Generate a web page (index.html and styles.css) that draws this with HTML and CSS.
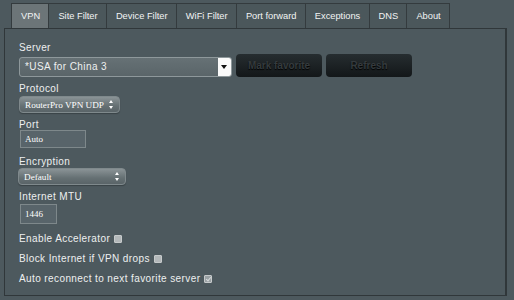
FILE: index.html
```html
<!DOCTYPE html>
<html lang="en">
<head>
    <meta charset="UTF-8">
    <meta name="viewport" content="width=device-width, initial-scale=1.0">
    <title>VPN Settings</title>
    <link rel="stylesheet" href="styles.css">
</head>
<body>
    <!-- Tabs -->
    <div class="tabs">
        <div class="tab active">VPN</div>
        <div class="tab">Site Filter</div>
        <div class="tab">Device Filter</div>
        <div class="tab">WiFi Filter</div>
        <div class="tab">Port forward</div>
        <div class="tab">Exceptions</div>
        <div class="tab">DNS</div>
        <div class="tab">About</div>
    </div>

    <div class="panel">
        <div class="label first">Server</div>
        <div class="server-row">
            <div class="server-select">
                <span class="server-value">*USA for China 3</span>
                <span class="server-arrow"></span>
            </div>
            <button type="button" class="dark-btn">Mark favorite</button>
            <button type="button" class="dark-btn">Refresh</button>
        </div>

        <div class="label">Protocol</div>
        <div class="pill-select protocol">
            <span>RouterPro VPN UDP</span>
            <span class="updown"></span>
        </div>

        <div class="label">Port</div>
        <div class="text-input port">Auto</div>

        <div class="label enc-label">Encryption</div>
        <div class="pill-select encryption">
            <span>Default</span>
            <span class="updown"></span>
        </div>

        <div class="label">Internet MTU</div>
        <div class="text-input mtu">1446</div>

        <div class="check-row first-check">Enable Accelerator <span class="box"></span></div>
        <div class="check-row">Block Internet if VPN drops <span class="box"></span></div>
        <div class="check-row">Auto reconnect to next favorite server <span class="box checked"></span></div>
    </div>
</body>
</html>
```

FILE: styles.css
```css
body {
    margin: 0;
    background-color: #4d595e;
    font-family: "Liberation Sans", Arial, sans-serif;
    color: #eef0f0;
    width: 514px;
    height: 300px;
    overflow: hidden;
}
.tabs {
    display: flex;
    margin-left: 11px;
    padding-top: 3px;
    height: 25px;
}
.tab {
    display: flex;
    align-items: center;
    padding: 0 8.25px 0 9px;
    font-size: 9.3px;
    color: #f2f4f4;
    background-color: #4b575b;
    border: 1px solid #343b3e;
    border-bottom: none;
    border-left: none;
}
.tab:first-child {
    border-left: 1px solid #343b3e;
}
.tab.active {
    background-color: #6c7578;
}
.panel {
    margin-left: 4px;
    width: 503px;
    height: 268px;
    border: 1px solid #30373a;
    border-right-width: 2px;
    box-sizing: border-box;
    padding-left: 14px;
}
.label {
    font-size: 10px;
    letter-spacing: 0.4px;
    line-height: 12px;
    margin-top: 6px;
}
.label.first {
    margin-top: 13px;
}
.label.enc-label {
    margin-top: 8px;
}
.server-row {
    display: flex;
    align-items: flex-end;
    gap: 4px;
    height: 23px;
}
.server-select {
    display: flex;
    width: 213px;
    height: 20px;
    box-sizing: border-box;
    border: 1px solid #8e989b;
    border-radius: 3px;
    background: linear-gradient(#667175, #5a6569);
    overflow: hidden;
}
.server-value {
    flex: 1;
    padding-left: 5px;
    font-size: 10px;
    letter-spacing: 0.4px;
    line-height: 18px;
}
.server-arrow {
    width: 13px;
    background-color: #fafafa;
    position: relative;
}
.server-arrow::after {
    content: "";
    position: absolute;
    left: 3px;
    top: 7px;
    border-left: 3px solid transparent;
    border-right: 3px solid transparent;
    border-top: 4px solid #111;
}
.dark-btn {
    width: 86px;
    height: 23px;
    border: none;
    border-radius: 4px;
    background: linear-gradient(#262d30, #131719);
    color: #353b3e;
    font-family: "Liberation Sans", Arial, sans-serif;
    font-size: 10px;
    font-weight: bold;
    text-shadow: 0 1px 1px #000;
    padding: 0;
}
.pill-select {
    display: flex;
    align-items: center;
    justify-content: space-between;
    height: 17px;
    box-sizing: border-box;
    border: 1px solid #7f898c;
    border-radius: 4px;
    background: linear-gradient(#8a9396, #657073 60%, #5a6468);
    padding: 0 5px;
    font-family: "Liberation Serif", "Times New Roman", serif;
    font-size: 9.2px;
    color: #fff;
    box-shadow: 0 1px 1px rgba(0, 0, 0, 0.25);
}
.protocol {
    width: 101px;
    margin-top: 1px;
}
.encryption {
    width: 108px;
    margin-left: -1px;
}
.updown {
    position: relative;
    width: 5px;
    height: 9px;
}
.updown::before, .updown::after {
    content: "";
    position: absolute;
    left: 0;
    border-left: 2.5px solid transparent;
    border-right: 2.5px solid transparent;
}
.updown::before {
    top: 0;
    border-bottom: 3px solid #fff;
}
.updown::after {
    bottom: 0;
    border-top: 3px solid #fff;
}
.text-input {
    height: 18px;
    box-sizing: border-box;
    border: 1px solid #7e888b;
    background-color: #58646a;
    font-family: "Liberation Serif", "Times New Roman", serif;
    font-size: 9px;
    line-height: 16px;
    padding-left: 4px;
    color: #fff;
    margin-left: 1px;
}
.port {
    width: 66px;
    margin-top: -1px;
}
.mtu {
    width: 37px;
    height: 20px;
    line-height: 18px;
    margin-top: 1px;
}
.check-row {
    font-size: 10px;
    letter-spacing: 0.4px;
    line-height: 20px;
    display: flex;
    align-items: center;
    gap: 4px;
}
.first-check {
    margin-top: 5px;
}
.box {
    width: 8px;
    height: 8px;
    box-sizing: border-box;
    background-color: #b3b8ba;
    border: 1px solid #c6cacb;
    border-radius: 1px;
    position: relative;
}
.box.checked {
    background-color: #9aa1a4;
}
.box.checked::after {
    content: "";
    position: absolute;
    left: 2px;
    top: 0;
    width: 2px;
    height: 4px;
    border-right: 1px solid #d7dbdc;
    border-bottom: 1px solid #d7dbdc;
    transform: rotate(40deg);
}
```
